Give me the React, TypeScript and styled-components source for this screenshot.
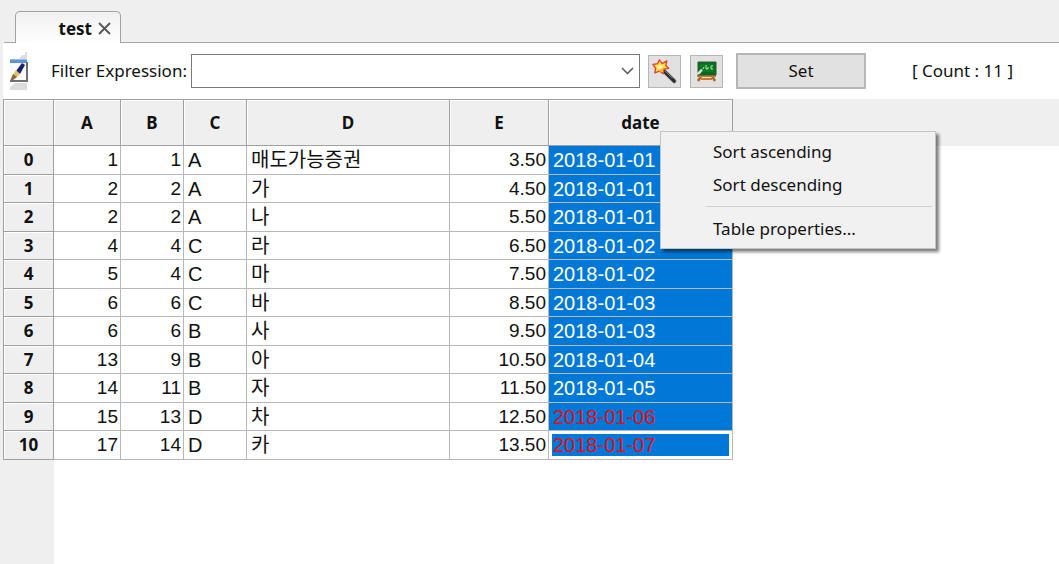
import React from "react";
import styled, { createGlobalStyle } from "styled-components";

const GlobalStyle = createGlobalStyle`
  *, *::before, *::after { box-sizing: border-box; }
  body {
    margin: 0;
    background: #fff;
    color: #111;
    font-family: "Noto Sans", "Noto Sans CJK KR", sans-serif;
    font-size: 17px;
    line-height: 22px;
  }
  button, select { font: inherit; color: inherit; }
`;

const Page = styled.div`
  display: flex;
  flex-direction: column;
  min-height: 100vh;
`;

const TabStrip = styled.div`
  display: flex;
  height: 43px;
  padding-top: 11px;
  background: linear-gradient(#a8a8a8, #a8a8a8) 4px 100% / 100% 1px no-repeat #efefef;
`;

const Tab = styled.div`
  display: flex;
  align-items: center;
  justify-content: flex-end;
  gap: 6px;
  width: 106px;
  margin-left: 15px;
  padding: 2px 9px 0 0;
  border: 1px solid #a3a3a3;
  border-bottom: 0;
  border-radius: 5px 5px 0 0;
  background: linear-gradient(#f0f0f0, #fff);
  font-weight: 700;
`;

const CloseButton = styled.button`
  display: flex;
  padding: 0;
  border: 0;
  background: none;
`;

const Toolbar = styled.form`
  display: flex;
  align-items: center;
  height: 56px;
  padding: 0 36px 0 6px;
  border-left: 3px solid #efefef;
  background: #fff;
`;

const FilterLabel = styled.label`
  width: 140px;
  margin-left: 23px;
  white-space: nowrap;
`;

const Combo = styled.div`
  display: grid;
  flex: 1;
  align-items: center;
  margin-right: 8px;
  & > * { grid-area: 1 / 1; }
  & > svg { justify-self: end; margin-right: 6px; pointer-events: none; }
`;

const ComboSelect = styled.select`
  width: 100%;
  height: 34px;
  padding: 0 30px 0 6px;
  appearance: none;
  border: 1px solid #7a7a7a;
  border-radius: 0;
  background: #fff;
`;

const ToolButton = styled.button<{ $wide?: boolean }>`
  display: flex;
  align-items: center;
  justify-content: center;
  width: ${(p) => (p.$wide ? 130 : 33)}px;
  height: ${(p) => (p.$wide ? 36 : 33)}px;
  margin-right: ${(p) => (p.$wide ? 46 : 9)}px;
  margin-left: ${(p) => (p.$wide ? 4 : 0)}px;
  padding: 0;
  border: ${(p) => (p.$wide ? 2 : 1)}px solid #b6b6b6;
  background: #e1e1e1;
`;

const Count = styled.output`
  width: 111px;
  white-space: pre;
`;

const GridArea = styled.main`
  flex: 1;
  padding-left: 3px;
  background:
    linear-gradient(#efefef, #efefef) 0 0 / 100% 47px no-repeat,
    linear-gradient(#efefef, #efefef) 0 0 / 54px 100% no-repeat,
    #fff;
`;

const Table = styled.table`
  width: 730px;
  border-collapse: separate;
  border-spacing: 0;
  table-layout: fixed;
  border-top: 1px solid #a0a0a0;
`;

const HeadCell = styled.th<{ $row?: boolean }>`
  position: relative;
  height: ${(p) => (p.$row ? "auto" : "46px")};
  padding: 0;
  border: 0 solid #a0a0a0;
  border-width: 0 1px 1px 0;
  background: #efefef;
  box-shadow: inset 1px 1px #fff;
  font-weight: 700;
  line-height: 20px;
  &:first-child { border-left-width: 1px; }
`;

const Row = styled.tr`
  height: 28px;
  &:nth-child(odd) { height: 29px; }
`;

type CellKind = "number" | "text" | "date";

const Cell = styled.td<{ $kind: CellKind; $alert?: boolean; $focused?: boolean }>`
  padding: 0 ${(p) => (p.$kind === "number" ? 2 : 4)}px 0 4px;
  border: 0 solid #b8b8b8;
  border-width: 0 1px 1px 0;
  background: ${(p) => (p.$kind === "date" ? "#0078d7" : "#fff")};
  background-clip: padding-box;
  box-shadow: ${(p) => (p.$focused ? "inset 0 0 0 3px #fff" : "none")};
  color: ${(p) => (p.$alert ? "#e0101c" : p.$kind === "date" ? "#fff" : "#111")};
  font-family: "Liberation Sans", "Noto Sans CJK KR", sans-serif;
  font-size: ${(p) => (p.$kind === "number" ? 19 : 20)}px;
  line-height: 20px;
  text-align: ${(p) => (p.$kind === "number" ? "right" : "left")};
  white-space: nowrap;
`;

const Menu = styled.div`
  position: absolute;
  z-index: 1;
  top: 31px;
  left: 111px;
  width: 276px;
  padding: 3px;
  border: 1px solid #c4c4c4;
  background: #f1f1f1;
  box-shadow: 3px 3px 3px rgba(0, 0, 0, 0.5);
`;

const MenuItem = styled.button`
  display: block;
  width: 100%;
  height: 33px;
  padding: 0 0 0 49px;
  border: 0;
  background: none;
  font-weight: 400;
  text-align: left;
`;

const Separator = styled.hr`
  height: 1px;
  margin: 5px 0 5px 42px;
  border: 0;
  background: #d2d2d2;
`;

const PageBrushIcon = () => (
  <svg width="19" height="40" viewBox="0 0 19 40" aria-hidden="true">
    <path d="M18 1v7H10l3-4h3V1zM1 36l5-4h12v7H1z" fill="#dcdcdc" />
    <path d="M1 8h17v23H1z" fill="#fafafa" />
    <path d="M1 8h17v4H1z" fill="#5b93e0" />
    <path d="M1 8h17v1H1z" fill="#98bdf0" />
    <path d="M1 30h17V11" fill="none" stroke="#6f6f6f" strokeWidth="2" />
    <path d="M13 12l3 2-5 9-4-3z" fill="#17245f" />
    <path d="M7 19l4 4-4 4-3-3z" fill="#e3bd6c" />
    <path d="M4 23l4 3-4 3-3 1z" fill="#8a6a35" />
  </svg>
);

const WandIcon = () => (
  <svg width="25" height="25" viewBox="0 0 27 27" aria-hidden="true">
    <path d="M13 13l11 11" stroke="#aaa" strokeWidth="5" strokeLinecap="round" />
    <path d="M13 13l11 11" stroke="#292929" strokeWidth="3.5" strokeLinecap="round" />
    <path d="M14 13l8 8" stroke="#858585" strokeWidth="1" />
    <path
      d="M8 1l3 4 5-3-1 5 3 3-5 1-1 5-4-3-5 2 1-5-3-4 5-1z"
      fill="#ffe14a"
      stroke="#dd4a2b"
      strokeWidth="1.5"
      strokeLinejoin="round"
    />
    <path d="M8 5l2 3 3-1-2 3-3 2-3-2 2-2z" fill="#fff6a8" />
    <path d="M6 12l4-1 3-3-1 4-3 2z" fill="#f6a928" />
  </svg>
);

const BoardIcon = () => (
  <svg width="27" height="27" viewBox="0 0 27 27" aria-hidden="true">
    <path d="M8 18l-3 5M19 18l3 5" stroke="#a8662c" strokeWidth="2.5" />
    <path d="M4 18h19M8 21h11" stroke="#c97a31" strokeWidth="2" />
    <path d="M5 4h18v13H5z" fill="#0a6a1d" stroke="#2f5a2d" />
    <path d="M7 6h14v8H7z" fill="#087c20" />
    <path d="M10 11l1-2M13 7v4h2v-2M20 8h-2v3h2" fill="none" stroke="#b8dfba" />
    <path d="M3 16l5-5 2 1-3 4-4 1z" fill="#d6dce0" />
  </svg>
);

const rows: [number, number, string, string, string, string][] = [
  [1, 1, "A", "매도가능증권", "3.50", "2018-01-01"],
  [2, 2, "A", "가", "4.50", "2018-01-01"],
  [2, 2, "A", "나", "5.50", "2018-01-01"],
  [4, 4, "C", "라", "6.50", "2018-01-02"],
  [5, 4, "C", "마", "7.50", "2018-01-02"],
  [6, 6, "C", "바", "8.50", "2018-01-03"],
  [6, 6, "B", "사", "9.50", "2018-01-03"],
  [13, 9, "B", "아", "10.50", "2018-01-04"],
  [14, 11, "B", "자", "11.50", "2018-01-05"],
  [15, 13, "D", "차", "12.50", "2018-01-06"],
  [17, 14, "D", "카", "13.50", "2018-01-07"],
];

const columns: { name: string; width: number; kind: CellKind }[] = [
  { name: "A", width: 67, kind: "number" },
  { name: "B", width: 63, kind: "number" },
  { name: "C", width: 63, kind: "text" },
  { name: "D", width: 203, kind: "text" },
  { name: "E", width: 99, kind: "number" },
  { name: "date", width: 184, kind: "date" },
];

const ContextMenu = () => (
  <Menu role="menu">
    <MenuItem role="menuitem">Sort ascending</MenuItem>
    <MenuItem role="menuitem">Sort descending</MenuItem>
    <Separator />
    <MenuItem role="menuitem">Table properties...</MenuItem>
  </Menu>
);

export default function App() {
  return (
    <Page>
      <GlobalStyle />
      <TabStrip>
        <Tab>
          test
          <CloseButton aria-label="Close tab">
            <svg width="13" height="13" viewBox="0 0 13 13" aria-hidden="true">
              <path d="M1 1l11 11M12 1L1 12" stroke="#555" strokeWidth="1.8" />
            </svg>
          </CloseButton>
        </Tab>
      </TabStrip>
      <Toolbar onSubmit={(e) => e.preventDefault()}>
        <PageBrushIcon />
        <FilterLabel htmlFor="filter">Filter Expression:</FilterLabel>
        <Combo>
          <ComboSelect id="filter">
            <option value="" />
          </ComboSelect>
          <svg width="13" height="8" viewBox="0 0 13 8" aria-hidden="true">
            <path d="M1 1l5.5 5.5L12 1" fill="none" stroke="#555" strokeWidth="1.5" />
          </svg>
        </Combo>
        <ToolButton type="button" aria-label="Build expression">
          <WandIcon />
        </ToolButton>
        <ToolButton type="button" aria-label="Show board">
          <BoardIcon />
        </ToolButton>
        <ToolButton $wide type="submit">
          Set
        </ToolButton>
        <Count>[ Count : 11 ]</Count>
      </Toolbar>
      <GridArea>
        <Table>
          <colgroup>
            <col width={51} />
            {columns.map((c) => (
              <col key={c.name} width={c.width} />
            ))}
          </colgroup>
          <thead>
            <tr>
              <HeadCell />
              {columns.map((c) => (
                <HeadCell key={c.name} scope="col">
                  {c.name}
                  {c.kind === "date" && <ContextMenu />}
                </HeadCell>
              ))}
            </tr>
          </thead>
          <tbody>
            {rows.map((row, r) => (
              <Row key={r}>
                <HeadCell $row scope="row">
                  {r}
                </HeadCell>
                {row.map((value, c) => (
                  <Cell
                    key={c}
                    $kind={columns[c].kind}
                    $alert={c === 5 && r >= 9}
                    $focused={c === 5 && r === rows.length - 1}
                  >
                    {value}
                  </Cell>
                ))}
              </Row>
            ))}
          </tbody>
        </Table>
      </GridArea>
    </Page>
  );
}
